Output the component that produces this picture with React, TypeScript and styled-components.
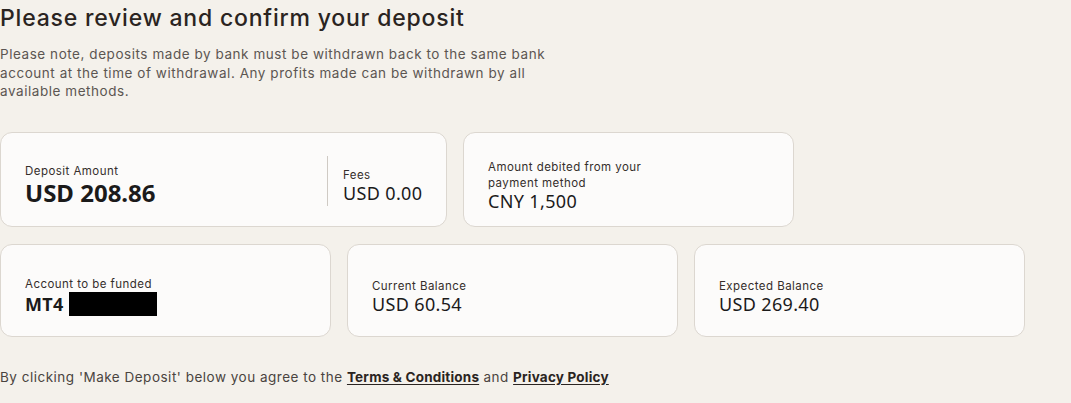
import styled, { createGlobalStyle } from "styled-components";

const GlobalStyle = createGlobalStyle`
  html, body {
    margin: 0;
    padding: 0;
    background: #f4f1eb;
  }
  body {
    font-family: Inter, "Noto Sans", sans-serif;
    color: #2b2522;
  }
`;

const Page = styled.div`
  width: 1071px;
  height: 403px;
  box-sizing: border-box;
  padding-top: 4px;
  background: #f4f1eb;
  overflow: hidden;
`;

const Title = styled.h1`
  margin: 0;
  font-size: 23px;
  line-height: 28px;
  font-weight: 500;
  color: #2a2421;
  letter-spacing: 0.8px;
`;

const Note = styled.p`
  margin: 13px 0 0;
  width: 560px;
  font-size: 13.5px;
  line-height: 18.5px;
  color: #5c5652;
  letter-spacing: 0.55px;
`;

const Rows = styled.div`
  display: flex;
  flex-direction: column;
  gap: 17px;
  margin-top: 31px;
`;

const Row = styled.div`
  display: flex;
  gap: 16px;
`;

const Card = styled.div<{ $w: number; $h: number }>`
  box-sizing: border-box;
  flex: none;
  width: ${(p) => p.$w}px;
  height: ${(p) => p.$h}px;
  display: flex;
  align-items: center;
  padding: 12px 24px 0;
  background: #fcfbfa;
  border: 1px solid #dcd7d0;
  border-radius: 12px;
`;

const Field = styled.div<{ $w?: number }>`
  display: flex;
  flex-direction: column;
  flex: none;
  width: ${(p) => (p.$w ? `${p.$w}px` : "auto")};
`;

const Divider = styled.div`
  align-self: center;
  flex: none;
  width: 1px;
  height: 50px;
  background: #cfcac4;
  margin: 0 15px 8px 0;
`;

const Label = styled.div`
  font-size: 11.5px;
  line-height: 16px;
  color: #352e2b;
  letter-spacing: 0.45px;
`;

const Value = styled.div<{ $big?: boolean; $bold?: boolean }>`
  font-family: "Noto Sans", "Open Sans", sans-serif;
  font-size: ${(p) => (p.$big ? "24px" : "18px")};
  line-height: ${(p) => (p.$big ? "28px" : "21px")};
  font-weight: ${(p) => (p.$bold ? 700 : 400)};
  letter-spacing: ${(p) => (p.$big ? "0" : "0.35px")};
  color: #1b1a1a;
  white-space: nowrap;
  display: flex;
  align-items: center;
  gap: 5px;
`;

const Redacted = styled.span`
  display: inline-block;
  width: 88px;
  height: 24px;
  background: #000;
`;

const Footer = styled.p`
  margin: 31px 0 0;
  font-size: 13.5px;
  line-height: 18px;
  color: #4a4440;
  letter-spacing: 0.5px;
`;

const Link = styled.a`
  color: #2a2421;
  font-weight: 700;
  letter-spacing: 0.2px;
  text-decoration: underline;
  text-underline-offset: 2px;
`;

export default function App() {
  return (
    <>
      <GlobalStyle />
      <Page>
        <Title>Please review and confirm your deposit</Title>
        <Note>
          Please note, deposits made by bank must be withdrawn back to the same bank
          account at the time of withdrawal. Any profits made can be withdrawn by all
          available methods.
        </Note>
        <Rows>
          <Row>
            <Card $w={447} $h={95}>
              <Field $w={302}>
                <Label>Deposit Amount</Label>
                <Value $big $bold>USD 208.86</Value>
              </Field>
              <Divider />
              <Field>
                <Label>Fees</Label>
                <Value>USD 0.00</Value>
              </Field>
            </Card>
            <Card $w={331} $h={95}>
              <Field $w={168}>
                <Label>Amount debited from your payment method</Label>
                <Value>CNY 1,500</Value>
              </Field>
            </Card>
          </Row>
          <Row>
            <Card $w={331} $h={93}>
              <Field>
                <Label>Account to be funded</Label>
                <Value $bold>
                  MT4 <Redacted />
                </Value>
              </Field>
            </Card>
            <Card $w={331} $h={93}>
              <Field>
                <Label>Current Balance</Label>
                <Value>USD 60.54</Value>
              </Field>
            </Card>
            <Card $w={331} $h={93}>
              <Field>
                <Label>Expected Balance</Label>
                <Value>USD 269.40</Value>
              </Field>
            </Card>
          </Row>
        </Rows>
        <Footer>
          By clicking 'Make Deposit' below you agree to the{" "}
          <Link href="#">Terms &amp; Conditions</Link> and{" "}
          <Link href="#">Privacy Policy</Link>
        </Footer>
      </Page>
    </>
  );
}
